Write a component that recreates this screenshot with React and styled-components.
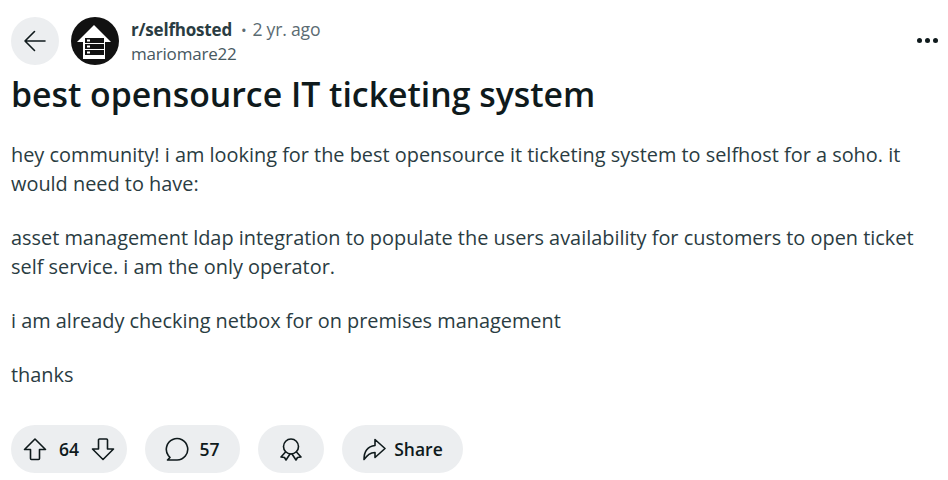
import React from 'react';
import styled, { createGlobalStyle } from 'styled-components';

const Global = createGlobalStyle`
  html, body { margin:0; padding:0; background:#fff; }
  body { font-family:"Open Sans","Noto Sans",sans-serif; width:948px; height:480px; overflow:hidden; }
`;

const Page = styled.main`
  display:flex;
  flex-direction:column;
  padding:17px 0 0 11px;
  width:948px;
  box-sizing:border-box;
`;

const Header = styled.header`
  display:flex;
  align-items:center;
  height:48px;
`;

const RoundButton = styled.button`
  display:flex;
  align-items:center;
  justify-content:center;
  width:48px;
  height:48px;
  padding:0;
  border:0;
  border-radius:50%;
  background:#eceef0;
`;

const Avatar = styled.div`
  width:48px;
  height:48px;
  margin-left:12px;
  border-radius:50%;
  background:#111;
  flex:none;
`;

const Meta = styled.div`
  margin-left:12px;
  display:flex;
  flex-direction:column;
  flex:1;
`;

const MetaTop = styled.div`
  display:flex;
  align-items:baseline;
  font-size:17.6px;
  line-height:25px;
  letter-spacing:-0.2px;
  color:#5b6b72;
`;

const Sub = styled.strong`
  font-weight:700;
  font-size:17px;
  color:#2a3c42;
`;

const Dot = styled.span`
  margin:0 6px 0 9px;
  font-size:15px;
`;

const User = styled.div`
  font-size:17px;
  line-height:22px;
  letter-spacing:-0.2px;
  color:#47585f;
`;

const More = styled.div`
  display:flex;
  gap:3px;
  margin-right:10px;
  align-self:flex-start;
  padding-top:21px;
`;

const MoreDot = styled.i`
  width:5px;
  height:5px;
  border-radius:50%;
  background:#0f1a1c;
`;

const Title = styled.h1`
  margin:6px 0 0;
  font-size:33.8px;
  line-height:46px;
  font-weight:600;
  color:#0f1a1c;
`;

const Body = styled.div`
  margin-top:23px;
  width:925px;
  font-size:19.9px;
  line-height:29px;
  color:#2a3c42;
`;

const Para = styled.p`
  margin:0 0 25px;
`;

const Actions = styled.div`
  display:flex;
  gap:18px;
  margin-top:11px;
`;

const Pill = styled.button`
  display:flex;
  align-items:center;
  justify-content:center;
  gap:${(p) => p.$gap}px;
  width:${(p) => p.$w}px;
  height:48px;
  padding:0;
  border:0;
  border-radius:24px;
  background:#eceef0;
  font-family:inherit;
  font-size:17.5px;
  font-weight:600;
  color:#0f1a1c;
`;

const Ico = ({ children }) => (
  <svg width="24" height="24" viewBox="0 0 24 24" fill="none" stroke="#0f1a1c" strokeWidth="1.6" strokeLinejoin="round" strokeLinecap="round">
    {children}
  </svg>
);

export default function App() {
  return (
    <Page>
      <Global />
      <Header>
        <RoundButton aria-label="back">
          <Ico><path d="M22 12H2M11.500 2.500 2 12l9.500 9.500" /></Ico>
        </RoundButton>
        <Avatar>
          <svg width="48" height="48" viewBox="0 0 48 48">
            <path d="M23 8 6 25h6v17h22V25h6z" fill="#fff" />
            <g fill="#111">
              <rect x="14" y="21" width="19" height="5" />
              <rect x="14" y="27" width="19" height="5" />
              <rect x="14" y="33" width="19" height="5" />
            </g>
            <g fill="#fff">
              <rect x="16" y="22.500" width="3" height="2" />
              <rect x="16" y="28.500" width="3" height="2" />
              <rect x="16" y="34.500" width="3" height="2" />
            </g>
          </svg>
        </Avatar>
        <Meta>
          <MetaTop><Sub>r/selfhosted</Sub><Dot>•</Dot>2 yr. ago</MetaTop>
          <User>mariomare22</User>
        </Meta>
        <More><MoreDot /><MoreDot /><MoreDot /></More>
      </Header>
      <Title>best opensource IT ticketing system</Title>
      <Body>
        <Para>hey community! i am looking for the best opensource it ticketing system to selfhost for a soho. it would need to have:</Para>
        <Para>asset management ldap integration to populate the users availability for customers to open ticket self service. i am the only operator.</Para>
        <Para>i am already checking netbox for on premises management</Para>
        <Para>thanks</Para>
      </Body>
      <Actions>
        <Pill $w={116} $gap={12}>
          <Ico><path d="M12 2 1.500 12.500H7.500V21.500a1 1 0 0 0 1 1h7a1 1 0 0 0 1-1V12.500h6z" /></Ico>
          64
          <Ico><path d="M12 22.500 22.500 12H16.500V3a1 1 0 0 0-1-1h-7a1 1 0 0 0-1 1V12H1.500z" /></Ico>
        </Pill>
        <Pill $w={95} $gap={10}>
          <Ico><path d="M2.500 23h9.500a10.700 10.700 0 1 0-8.700-4.500L5 20.500z" /></Ico>
          57
        </Pill>
        <Pill $w={66} $gap={0}>
          <Ico>
            <circle cx="12" cy="9.500" r="7.500" />
            <path d="M6.500 15 2 20l3.500.5L7 23l4-6M17.500 15l4.500 5-3.500.5L17 23l-4-6" />
          </Ico>
        </Pill>
        <Pill $w={121} $gap={8}>
          <Ico><path d="M13 2.500 23 11.500l-10 9v-5C8 15.500 5.500 18 2 22.500c0-8 3-13 11-14z" /></Ico>
          Share
        </Pill>
      </Actions>
    </Page>
  );
}
